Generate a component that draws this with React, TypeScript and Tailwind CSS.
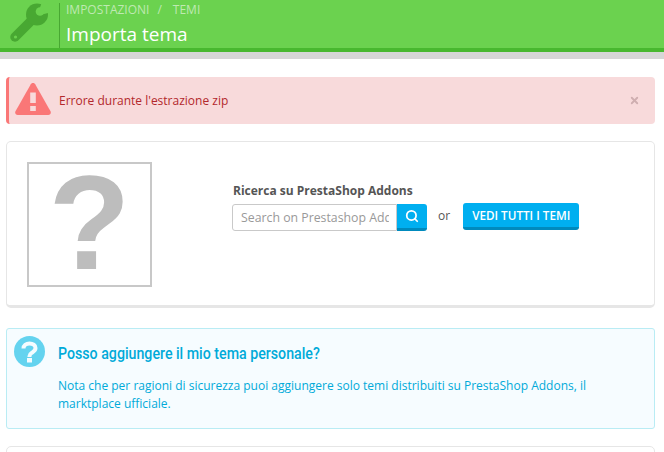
import { Search, X } from "lucide-react";

const openSans = "font-['Open_Sans',sans-serif]";

function WrenchIcon() {
  return (
    <svg viewBox="0 0 40 40" className="w-[40px] h-[40px]">
      <path d="M5 34 L22 17" stroke="#48a832" strokeWidth="9.500" strokeLinecap="round" />
      <circle cx="27" cy="11.500" r="11" fill="#48a832" />
      <path d="M28 10 L32 -1 L42 1 L42 9 L30 12 Z" fill="#6bd24f" />
      <circle cx="30" cy="8.500" r="4.300" fill="#6bd24f" />
      <circle cx="5.500" cy="34" r="1.600" fill="#6bd24f" />
    </svg>
  );
}

function WarningIcon() {
  return (
    <svg viewBox="0 0 36 32" className="w-[36px] h-[32px]">
      <path fill="#fa7777" d="M15.800 1.300c1-1.700 3.400-1.700 4.400 0l15.300 27c.9 1.700-.2 3.700-2.200 3.700H2.700c-2 0-3.100-2-2.200-3.700z" />
      <rect x="15.200" y="9.500" width="5.600" height="10.500" fill="#f8dadb" />
      <rect x="15.200" y="23" width="5.600" height="5" fill="#f8dadb" />
    </svg>
  );
}

function HelpIcon() {
  return (
    <svg viewBox="0 0 31 31" className="w-[31px] h-[31px]">
      <circle cx="15.500" cy="15.500" r="15.500" fill="#64d3ef" />
      <path
        fill="none"
        stroke="#f5fcff"
        strokeWidth="4"
        d="M9.500 12.500c0-3.200 2.600-5 6-5s6 1.800 6 4.500c0 2.200-1.500 3.300-3 4.300-1.500 1-3 1.700-3 3.700v1"
      />
      <rect x="13" y="22" width="5" height="4.500" fill="#f5fcff" />
    </svg>
  );
}

export default function App() {
  return (
    <div className={`w-[664px] h-[452px] overflow-hidden bg-white ${openSans}`}>
      {/* Header */}
      <div className="h-[59px] bg-[#d6d6d6]">
        <div className="h-[52px] bg-[#6bd24f] border-b-4 border-[#48b82f] flex">
          <div className="w-[59px] h-[45px] flex items-center justify-end pr-[9px] border-r-0">
            <WrenchIcon />
          </div>
          <div className="h-[45px] mt-[3px] border-l border-[#48a832] pl-[6px]">
            <div className="text-[12px] leading-[14px] text-[#bfe9b2] flex">
              <span>IMPOSTAZIONI</span>
              <span className="ml-[8px]">/</span>
              <span className="ml-[11px]">TEMI</span>
            </div>
            <div className="text-[19px] leading-[28px] mt-[3px] text-white">Importa tema</div>
          </div>
        </div>
      </div>

      <div className="px-[6px] pr-[9px]">
        {/* Alert */}
        <div className="mt-[18px] h-[47px] bg-[#f8dadb] border-l-[3px] border-[#fa7777] rounded-[4px] flex items-center text-[12px] text-[#b3282c]">
          <div className="ml-[6px] mt-[-3px]"><WarningIcon /></div>
          <span className="ml-[8px] mt-[1px]">Errore durante l'estrazione zip</span>
          <X size={11} strokeWidth={4} color="#cfaeb0" className="ml-auto mr-[15px]" />
        </div>

        {/* Addons search panel */}
        <div className="mt-[17px] h-[167px] bg-white border border-[#e6e6e6] border-b-[3px] rounded-[5px] flex">
          <div className="ml-[20px] mt-[20px] w-[125px] h-[125px] border-2 border-[#c8c8c8] flex items-center justify-center text-[#bdbdbd]">
            <span className="font-['Liberation_Sans',sans-serif] font-bold text-[134px] leading-none mt-[-3px]">?</span>
          </div>
          <div className="ml-[80px] mt-[40px]">
            <div className="pl-px text-[12px] leading-[17px] font-bold text-[#555555]">Ricerca su PrestaShop Addons</div>
            <div className="flex items-start mt-[5px]">
              <input
                placeholder="Search on Prestashop Addons"
                className="w-[165px] h-[27px] border border-[#c9c9c9] rounded-l-[3px] pl-[8px] pr-[7px] text-[12.300px] text-[#555555] placeholder:text-[#999999] outline-none"
              />
              <div className="w-[30px] h-[27px] bg-[#00aff0] border-b-[3px] border-[#008abd] rounded-r-[3px] flex items-center justify-center">
                <Search size={14} strokeWidth={3} color="#ffffff" />
              </div>
              <span className="ml-[11px] text-[12px] leading-[24px] text-[#555555]">or</span>
              <div className="ml-[13px] h-[27px] mt-[-1px] px-[9px] bg-[#00aff0] border-b-[3px] border-[#008abd] rounded-[3px] text-[11.700px] leading-[25px] font-semibold text-white">
                VEDI TUTTI I TEMI
              </div>
            </div>
          </div>
        </div>

        {/* Info box */}
        <div className="mt-[20px] h-[101px] bg-[#f6fcff] border border-[#b9ecf4] rounded-[3px] flex text-[#00aad9]">
          <div className="ml-[7px] mt-[7px]"><HelpIcon /></div>
          <div className="ml-[13px]">
            <div className="mt-[14px] text-[16.500px] leading-[22px] font-medium font-['Roboto',sans-serif] whitespace-nowrap origin-left scale-x-[0.86]">
              Posso aggiungere il mio tema personale?
            </div>
            <div className="mt-[12px] w-[570px] text-[12px] leading-[18px]">
              Nota che per ragioni di sicurezza puoi aggiungere solo temi distribuiti su PrestaShop Addons, il marktplace ufficiale.
            </div>
          </div>
        </div>

        {/* Next panel, cut off by the window */}
        <div className="mt-[17px] h-[60px] bg-white border border-[#e6e6e6] rounded-[5px]" />
      </div>
    </div>
  );
}
